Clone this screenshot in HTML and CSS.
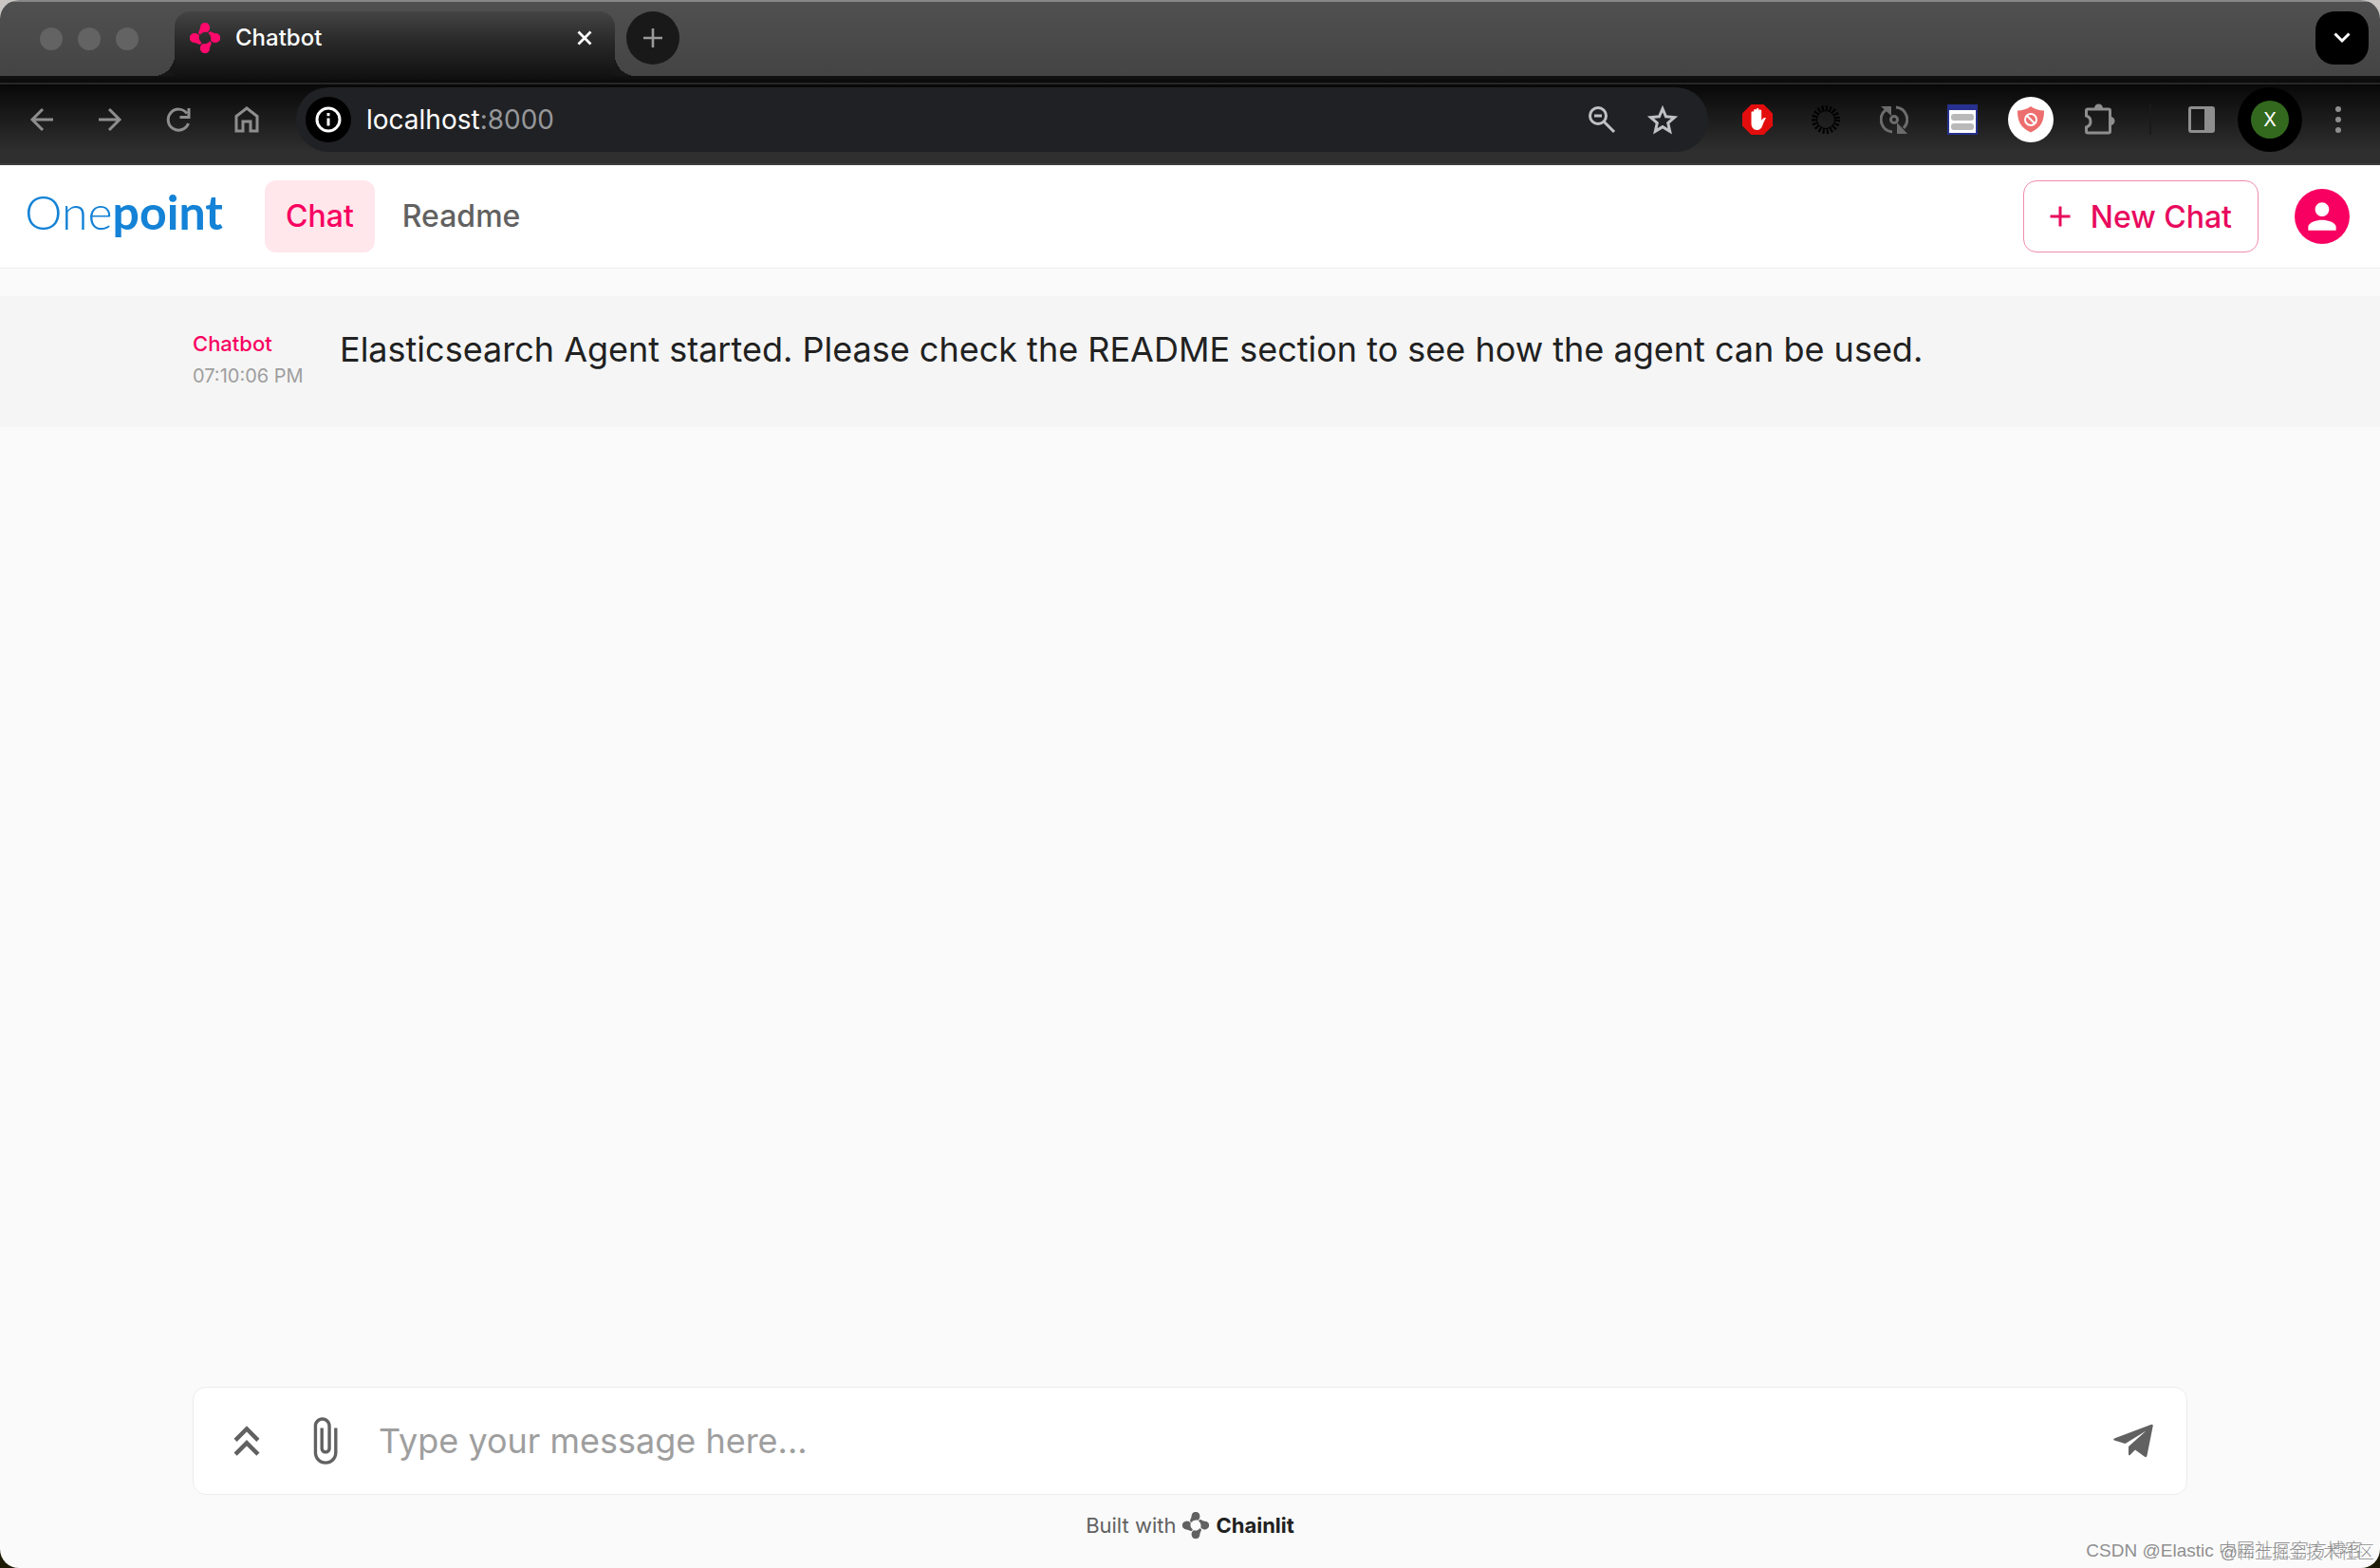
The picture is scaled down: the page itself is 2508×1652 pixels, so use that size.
FILE: index.html
```html
<!DOCTYPE html>
<html lang="en">
<head>
    <meta charset="UTF-8">
    <meta name="viewport" content="width=device-width, initial-scale=1.0">
    <title>Chatbot</title>
    <link rel="stylesheet" href="styles.css">
</head>
<body>
    <!-- petal shape shared by the favicon and the footer logo -->
    <svg class="defs" width="0" height="0" aria-hidden="true">
        <symbol id="chainlit" viewBox="0 0 32 32">
            <g id="petals">
                <path id="petal" d="M11 4.800a5 5 0 0 1 10 0c.3 2.200-.8 4-2.400 5.200C15.500 9.200 13 10 11.200 12.400 9.400 12.200 8.800 10.800 9.400 9.400 10.200 7.800 10.800 6.600 11 4.800z"/>
                <use href="#petal" transform="rotate(90 16 16)"/>
                <use href="#petal" transform="rotate(180 16 16)"/>
                <use href="#petal" transform="rotate(270 16 16)"/>
            </g>
        </symbol>
    </svg>

    <div class="window">
        <div class="tab-strip">
            <div class="lights"><span></span><span></span><span></span></div>
            <div class="tab">
                <svg class="favicon" width="32" height="32"><use href="#chainlit"/></svg>
                <span class="tab-title">Chatbot</span>
                <button class="tab-close" aria-label="Close tab">
                    <svg width="16" height="16" viewBox="0 0 16 16"><path d="M1.500 1.500l13 13M14.500 1.500l-13 13" stroke="#fff" stroke-width="2.800"/></svg>
                </button>
            </div>
            <button class="new-tab" aria-label="New tab">
                <svg width="20" height="20" viewBox="0 0 20 20"><path d="M10 0v20M0 10h20" stroke="#9a9a9a" stroke-width="2.600"/></svg>
            </button>
            <button class="tab-search" aria-label="Search tabs">
                <svg width="18" height="12" viewBox="0 0 18 12"><path d="M1.500 1.500L9 9l7.500-7.500" fill="none" stroke="#fff" stroke-width="3"/></svg>
            </button>
        </div>

        <div class="toolbar">
            <button class="tool" aria-label="Back">
                <svg width="26" height="26" viewBox="0 0 26 26"><path d="M25 13H3M14 2L3 13l11 11"/></svg>
            </button>
            <button class="tool" aria-label="Forward">
                <svg width="26" height="26" viewBox="0 0 26 26"><path d="M1 13h22M12 2l11 11-11 11"/></svg>
            </button>
            <button class="tool" aria-label="Reload">
                <svg width="28" height="28" viewBox="0 0 28 28"><path d="M24.500 18A11 11 0 1 1 23 7.500M25 2v9.500h-9.500"/></svg>
            </button>
            <button class="tool" aria-label="Home">
                <svg width="28" height="30" viewBox="0 0 28 30"><path d="M3 11.500L14 3l11 8.500V27h-7V17h-8v10H3z"/></svg>
            </button>

            <div class="address">
                <button class="site-info" aria-label="Site information">
                    <svg width="28" height="28" viewBox="0 0 28 28"><circle cx="14" cy="14" r="12" fill="none" stroke="#fff" stroke-width="3"/><path d="M14 12.500v8M14 7v3.200" stroke="#fff" stroke-width="3"/></svg>
                </button>
                <div class="url">localhost<span>:8000</span></div>
                <button class="tool-inner" aria-label="Zoom">
                    <svg width="30" height="30" viewBox="0 0 30 30"><circle cx="11" cy="11" r="8.500"/><path d="M17 17l11 11M7 11h8"/></svg>
                </button>
                <button class="tool-inner" aria-label="Bookmark this tab">
                    <svg width="34" height="32" viewBox="0 0 34 32"><path d="M17 4.500l3.500 8.300 9 .8-6.800 5.900 2 8.800-7.700-4.700-7.700 4.700 2-8.800-6.800-5.900 9-.8z"/></svg>
                </button>
            </div>

            <button class="tool" aria-label="Ad blocker">
                <svg width="32" height="32" viewBox="0 0 32 32"><path d="M9.500 0h13L32 9.500v13L22.500 32h-13L0 22.500v-13z" fill="#e40d0d" stroke="none"/><path d="M9.500 15.500v-7a1.300 1.300 0 0 1 2.600 0V6a1.400 1.400 0 0 1 2.700 0V5a1.400 1.400 0 0 1 2.700 0v1.500a1.400 1.400 0 0 1 2.700 0v10.500c1.200-2 3-3.500 4.800-2.700-1.800 2.700-2.600 5-3.700 8-1 3-3 4.700-5.700 4.700-4 0-6.100-3-6.100-7z" fill="#fff" stroke="none"/></svg>
            </button>
            <button class="tool" aria-label="Extension">
                <svg width="30" height="30" viewBox="0 0 30 30"><circle class="spokes" cx="15" cy="15" r="12"/><circle class="spoke-ring" cx="15" cy="15" r="9.500"/></svg>
            </button>
            <button class="tool" aria-label="Sync">
                <svg class="sync" width="30" height="30" viewBox="0 0 30 30"><path d="M13 28A13 13 0 0 1 6 5M17 2a13 13 0 0 1 8 22"/><circle cx="15" cy="15" r="3.500"/><path class="solid" d="M1 1h11v10zM18 18v12h11z"/></svg>
            </button>
            <button class="tool" aria-label="Notes">
                <svg width="32" height="32" viewBox="0 0 32 32"><path d="M0 0h32v32H0z" fill="#27318f" stroke="none"/><path d="M2 6h28v24H2z" fill="#fff" stroke="none"/><rect x="4" y="10" width="24" height="7" rx="3" fill="#b9b9b9" stroke="none"/><rect x="4" y="20" width="24" height="7" rx="3" fill="#b9b9b9" stroke="none"/></svg>
            </button>
            <button class="tool" aria-label="Shield">
                <svg width="48" height="48" viewBox="0 0 48 48"><circle cx="24" cy="24" r="24" fill="#fff" stroke="none"/><path d="M24 10c4 3 8.500 4.300 14 4.500 0 11-3 18-14 23-11-5-14-12-14-23C15.500 14.300 20 13 24 10z" fill="#ed6e6e" stroke="none"/><circle class="thin" cx="24" cy="24" r="6"/><path class="thin" d="M20 20l8 8"/></svg>
            </button>
            <button class="tool" aria-label="Extensions">
                <svg width="34" height="34" viewBox="0 0 34 34"><path d="M5 6h22q1.500 0 1.500 1.500v22q0 1.500-1.500 1.500H5q-1.500 0-1.500-1.500V25c6-2 6-10 0-12V7.500Q3.500 6 5 6z"/><path d="M12 5a4.500 4.500 0 0 1 9 0zM29 14a4.500 4.500 0 0 1 0 9z" fill="#8e8e8e" stroke="none"/></svg>
            </button>
            <span class="divider"></span>
            <button class="tool" aria-label="Side panel">
                <svg width="28" height="28" viewBox="0 0 28 28"><rect x="1.500" y="1.500" width="25" height="25" rx="1.500"/><path d="M17 1h10v26H17z" fill="#8e8e8e" stroke="none"/></svg>
            </button>
            <button class="tool profile" aria-label="Profile"><span>X</span></button>
            <button class="tool" aria-label="Menu">
                <svg width="6" height="28" viewBox="0 0 6 28"><g fill="#8e8e8e" stroke="none"><circle cx="3" cy="3" r="3"/><circle cx="3" cy="14" r="3"/><circle cx="3" cy="25" r="3"/></g></svg>
            </button>
        </div>

        <header class="app-header">
            <a class="logo" href="#">One<b>point</b></a>
            <nav class="nav">
                <a class="nav-link active" href="#">Chat</a>
                <a class="nav-link" href="#">Readme</a>
            </nav>
            <button class="new-chat">
                <svg width="36" height="36" viewBox="0 0 24 24"><path d="M19 13h-6v6h-2v-6H5v-2h6V5h2v6h6z"/></svg>
                New Chat
            </button>
            <button class="user" aria-label="Account">
                <svg width="44" height="44" viewBox="0 0 24 24"><path d="M12 12c2.210 0 4-1.790 4-4s-1.790-4-4-4-4 1.790-4 4 1.790 4 4 4zm0 2c-2.670 0-8 1.340-8 4v2h16v-2c0-2.660-5.330-4-8-4z"/></svg>
            </button>
        </header>

        <main class="messages">
            <div class="message">
                <div class="message-inner">
                    <div class="meta">
                        <div class="author">Chatbot</div>
                        <div class="time">07:10:06 PM</div>
                    </div>
                    <div class="content">Elasticsearch Agent started. Please check the README section to see how the agent can be used.</div>
                </div>
            </div>
        </main>

        <footer class="footer">
            <form class="composer">
                <button type="button" class="icon-btn" aria-label="History">
                    <svg width="54" height="54" viewBox="0 0 24 24"><path d="M6 17.590 7.410 19 12 14.420 16.590 19 18 17.590l-6-6zM6 11l1.410 1.410L12 7.830l4.590 4.580L18 11l-6-6z"/></svg>
                </button>
                <button type="button" class="icon-btn" aria-label="Attach file">
                    <svg width="54" height="54" viewBox="0 0 24 24"><path d="M16.500 6v11.500c0 2.210-1.790 4-4 4s-4-1.790-4-4V5c0-1.380 1.120-2.500 2.500-2.500s2.500 1.120 2.500 2.500v10.500c0 .55-.45 1-1 1s-1-.45-1-1V6H10v9.500c0 1.380 1.120 2.500 2.500 2.500s2.500-1.120 2.500-2.500V5c0-2.210-1.790-4-4-4S7 2.790 7 5v12.500c0 3.040 2.460 5.500 5.500 5.500s5.500-2.460 5.500-5.500V6h-1.500z"/></svg>
                </button>
                <input type="text" aria-label="Message" placeholder="Type your message here...">
                <button class="icon-btn" aria-label="Send">
                    <svg width="42" height="36" viewBox="0 0 42 36"><path d="M1 15.500L39.500 1Q42 .3 41.700 2.500L35.500 33.500Q35 36 33 34.700L23 27.500 17.500 33Q16 34 16 32V24L34.500 7.500 12.500 21 1 17.500Q-.5 16.500 1 15.500z"/></svg>
                </button>
            </form>
            <a class="built-with" href="#">
                Built with
                <svg width="28" height="28"><use href="#chainlit"/></svg>
                <b>Chainlit</b>
            </a>
        </footer>

        <div class="watermark">CSDN @Elastic 中国社区官方博客</div>
        <div class="watermark second">@稀土掘金技术社区</div>
    </div>
</body>
</html>
```
FILE: styles.css
```css
* {
    box-sizing: border-box;
}
body {
    margin: 0;
    font-family: Inter, "Noto Sans CJK SC", sans-serif;
    background: linear-gradient(#c9c6c3 50%, #1d1a05 50%);
}
button {
    display: flex;
    align-items: center;
    justify-content: center;
    padding: 0;
    border: none;
    background: none;
    font-family: inherit;
    cursor: pointer;
}
a {
    text-decoration: none;
}
.defs {
    position: absolute;
}
.window {
    position: relative;
    display: flex;
    flex-direction: column;
    min-height: 100vh;
    border-radius: 20px;
    overflow: hidden;
    background: #fafafa;
}

/* browser chrome */
.tab-strip {
    display: flex;
    align-items: flex-start;
    height: 80px;
    padding: 10px 12px 0 42px;
    border-top: 2px solid #888;
    background: linear-gradient(#505050, #444);
}
.lights {
    display: flex;
    gap: 16px;
    width: 142px;
    padding-top: 17px;
}
.lights span {
    width: 24px;
    height: 24px;
    border-radius: 50%;
    background: #636363;
}
.tab {
    position: relative;
    display: flex;
    align-items: center;
    width: 464px;
    height: 68px;
    padding: 0 24px 12px 16px;
    border-radius: 16px 16px 0 0;
    background: linear-gradient(#444, #2a2a2a 45%, #121212);
}
/* curved feet of the tab */
.tab::before,
.tab::after {
    content: "";
    position: absolute;
    bottom: 0;
    width: 22px;
    height: 22px;
}
.tab::before {
    right: 100%;
    background: radial-gradient(circle at 0 0, transparent 22px, #161616 22px);
}
.tab::after {
    left: 100%;
    background: radial-gradient(circle at 100% 0, transparent 22px, #161616 22px);
}
.favicon {
    fill: #ff0a6c;
}
.tab-title {
    flex: 1;
    margin-left: 16px;
    font-size: 24px;
    font-weight: 500;
    line-height: 32px;
    color: #fff;
}
.new-tab {
    width: 56px;
    height: 56px;
    margin-left: 12px;
    border-radius: 50%;
    background: #191919;
}
.tab-search {
    width: 56px;
    height: 56px;
    margin-left: auto;
    border-radius: 20px;
    background: #000;
}
.toolbar {
    display: flex;
    align-items: center;
    height: 94px;
    padding: 12px 8px;
    border-bottom: 2px solid #3c3c3c;
    background: linear-gradient(#121212 0, #0a0a0a 7px, #262626 7px, #262626 9px, #080808 9px, #2f2f2f 80px, #2f2f2f);
}
.tool {
    flex: none;
    width: 72px;
    height: 68px;
}
.tool svg {
    fill: none;
    stroke: #8e8e8e;
    stroke-width: 3;
}
.tool .thin {
    stroke: #fff;
    stroke-width: 2;
}
.address {
    flex: 1;
    display: flex;
    align-items: center;
    height: 68px;
    margin: 0 16px;
    padding: 0 16px 0 10px;
    border-radius: 34px;
    background: #202124;
}
.site-info {
    width: 48px;
    height: 48px;
    border-radius: 50%;
    background: #000;
}
.url {
    flex: 1;
    margin-left: 16px;
    font-size: 28px;
    line-height: 36px;
    color: #fff;
}
.url span {
    color: #96979a;
}
.tool-inner {
    width: 64px;
    height: 64px;
}
.tool-inner svg {
    fill: none;
    stroke: #c0c1c3;
    stroke-width: 3;
}
.tool .spokes {
    stroke: #000;
    stroke-width: 6;
    stroke-dasharray: 2 2;
}
.tool .spoke-ring {
    stroke: #000;
    stroke-width: 1;
}
.tool .sync {
    stroke: #6c6c6c;
}
.sync .solid {
    fill: #6c6c6c;
    stroke: none;
}
.divider {
    width: 2px;
    height: 32px;
    margin: 0 17px;
    background: #1a1a1a;
}
.profile {
    width: 68px;
    margin: 0 2px;
    border-radius: 50%;
    background: #000;
}
.profile span {
    width: 40px;
    border-radius: 50%;
    background: #33691e;
    color: #fff;
    font-size: 20px;
    line-height: 40px;
}

/* app */
.app-header {
    display: flex;
    align-items: center;
    height: 109px;
    padding: 0 32px 0 26px;
    border-bottom: 1px solid #eee;
    background: #fff;
}
.logo {
    width: 210px;
    margin-right: 43px;
    padding-bottom: 10px;
    font-family: Lato, sans-serif;
    font-size: 50px;
    font-weight: 300;
    line-height: 60px;
    color: #1482d6;
}
.logo b {
    font-weight: 700;
}
.nav {
    display: flex;
    gap: 7px;
}
.nav-link {
    padding: 18px 22px;
    border-radius: 12px;
    font-size: 32px;
    font-weight: 500;
    line-height: 40px;
    color: #616161;
}
.nav-link.active {
    color: #f80061;
    background: #ffe7eb;
}
.new-chat {
    gap: 14px;
    height: 76px;
    margin-left: auto;
    padding: 0 27px 0 20px;
    border: 1px solid #f08aae;
    border-radius: 14px;
    font-size: 32px;
    font-weight: 500;
    color: #e80a5d;
}
.new-chat svg {
    fill: #e80a5d;
}
.user {
    width: 58px;
    height: 58px;
    margin-left: 38px;
    border-radius: 50%;
    background: #f80061;
}
.user svg {
    fill: #fff;
}
.messages {
    flex: 1;
    padding-top: 29px;
}
.message {
    padding: 32px 24px 38px;
    background: #f5f5f5;
}
.message-inner {
    display: flex;
    max-width: 2102px;
    margin: 0 auto;
}
.meta {
    width: 155px;
    font-size: 22px;
    line-height: 36px;
}
.author {
    font-weight: 500;
    color: #f80061;
}
.time {
    font-size: 20px;
    line-height: 32px;
    color: #9e9e9e;
}
.content {
    flex: 1;
    font-size: 36px;
    line-height: 48px;
    color: #212121;
}
.footer {
    padding: 0 24px 29px;
}
.composer {
    display: flex;
    align-items: center;
    max-width: 2102px;
    height: 114px;
    margin: 0 auto;
    padding: 0 35px 0 29px;
    border: 1px solid #ececec;
    border-radius: 14px;
    background: #fff;
}
.composer input {
    flex: 1;
    margin-left: 30px;
    padding: 0;
    border: none;
    outline: none;
    background: none;
    font-family: inherit;
    font-size: 36px;
    line-height: 48px;
    color: #212121;
}
.composer input::placeholder {
    color: #9e9e9e;
    opacity: 1;
}
.icon-btn svg {
    fill: #616161;
}
.icon-btn + .icon-btn {
    margin-left: 28px;
}
.built-with {
    display: flex;
    align-items: center;
    justify-content: center;
    gap: 7px;
    margin-top: 16px;
    font-size: 22px;
    line-height: 32px;
    color: #616161;
}
.built-with svg {
    fill: #616161;
}
.built-with b {
    color: #212121;
}
.watermark {
    position: absolute;
    right: 18px;
    bottom: 4px;
    font-family: "Liberation Sans", "Noto Sans CJK SC", sans-serif;
    font-size: 19px;
    font-weight: 300;
    line-height: 28px;
    color: #8e8e8e;
    text-shadow: 1px 1px 0 #fff;
}
.watermark.second {
    right: 6px;
    bottom: 2px;
    font-size: 18px;
}
```
